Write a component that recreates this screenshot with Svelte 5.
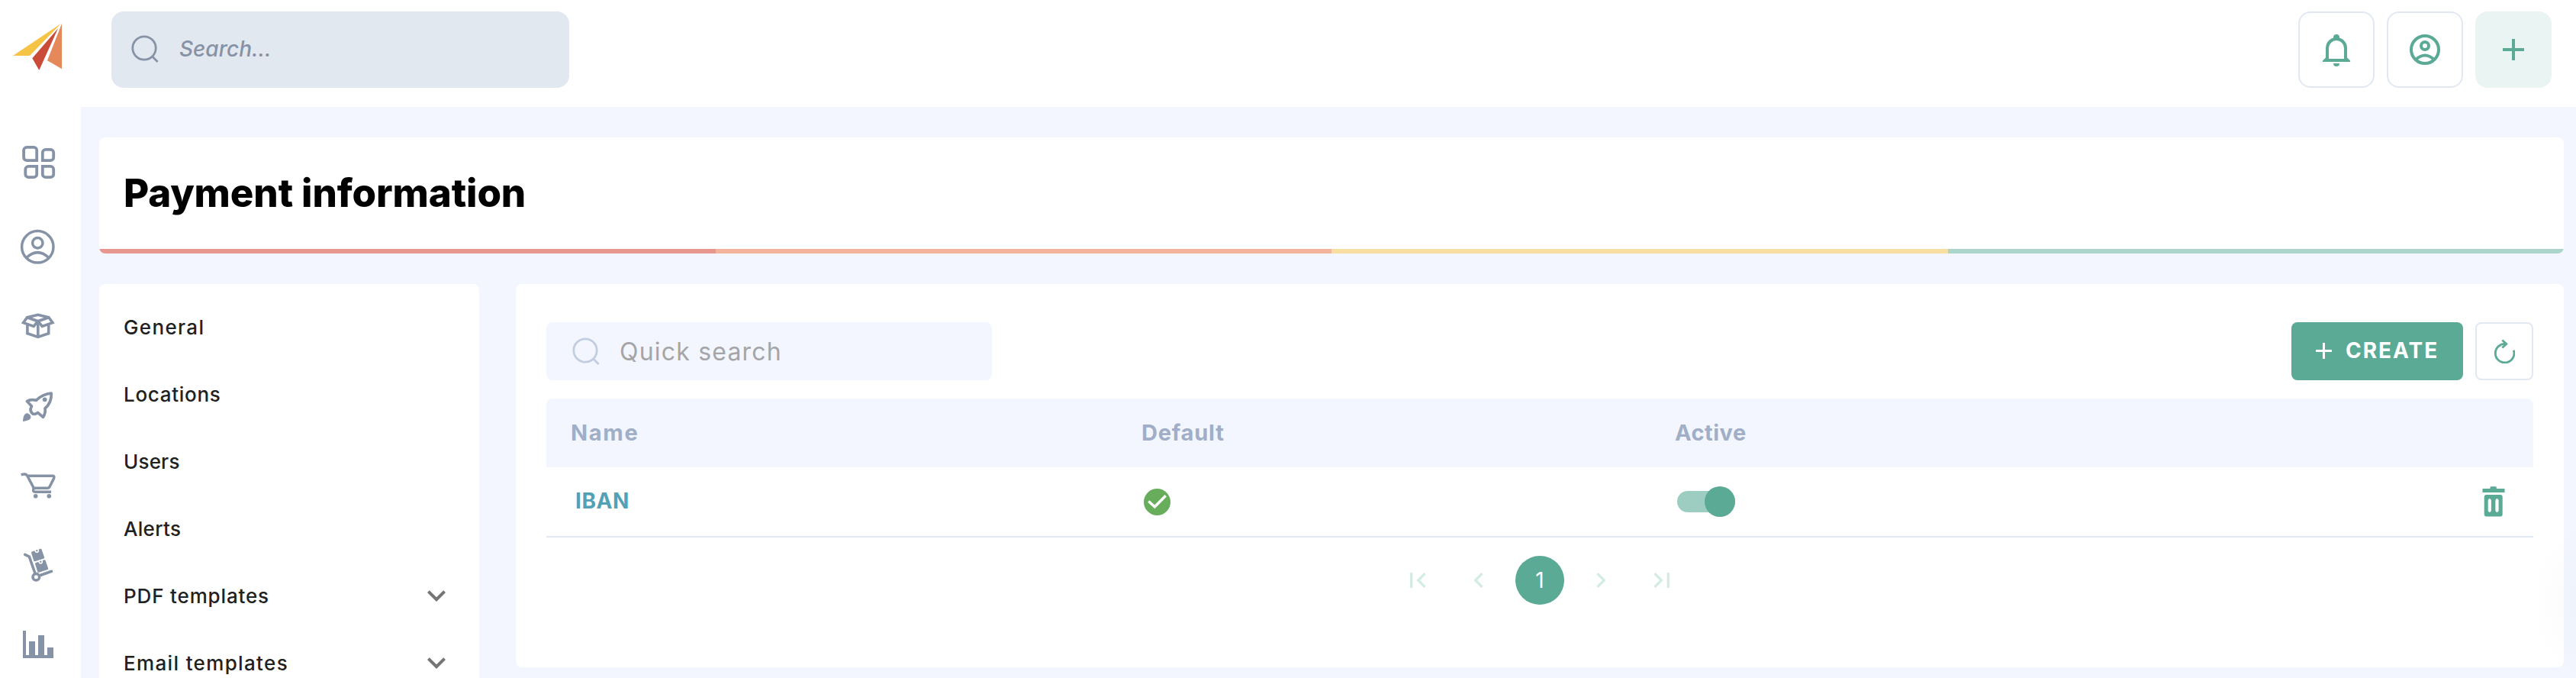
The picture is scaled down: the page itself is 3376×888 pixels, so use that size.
<script lang="ts">
  type MenuItem = { label: string; tracking: number; expandable?: boolean };

  const menu: MenuItem[] = [
    { label: 'General', tracking: 1.35 },
    { label: 'Locations', tracking: 0.7 },
    { label: 'Users', tracking: 0.2 },
    { label: 'Alerts', tracking: 0.3 },
    { label: 'PDF templates', tracking: 0.85, expandable: true },
    { label: 'Email templates', tracking: 1.35, expandable: true }
  ];

  const columns = [
    { label: 'Name', tracking: 1.7 },
    { label: 'Default', tracking: 0.8 },
    { label: 'Active', tracking: 0.5 }
  ];

  let methods = $state([{ name: 'IBAN', isDefault: true, active: true }]);
</script>

<div class="app">
  <aside class="sidebar">
    <a class="logo" href="#home" aria-label="Home">
      <svg width="64" height="62" viewBox="0 0 64 62">
        <path fill="#f6c445" d="M62.7 1 0 43h22z" />
        <path fill="#c94b38" d="M59 7.3 25.3 46.3l9 15.7z" />
        <path fill="#e5895b" d="M64 1 45 49.3l19 11z" />
      </svg>
    </a>
    <nav class="rail">
      <a href="#dashboard" aria-label="Dashboard">
        <svg class="icon" viewBox="0 0 48 48" stroke-width="3.8">
          <path d="M22.2 15.2H9.1a4 4 0 0 1-4-4V1.8a4 4 0 0 1 4-4h9.1a4 4 0 0 1 4 4z" />
          <path d="M29.8 15.2V4.8a4 4 0 0 1 4-4h6.4a4 4 0 0 1 4 4v6.4a4 4 0 0 1-4 4z" />
          <path d="M22.2 22.8v10.4a4 4 0 0 1-4 4h-6.9a4 4 0 0 1-4-4v-6.4a4 4 0 0 1 4-4z" />
          <path d="M29.8 22.8h10.4a4 4 0 0 1 4 4v6.4a4 4 0 0 1-4 4h-6.4a4 4 0 0 1-4-4z" />
        </svg>
      </a>
      <a href="#customers" aria-label="Customers">
        <svg class="icon" viewBox="0 0 48 48" stroke-width="3.5">
          <circle cx="23.3" cy="24.3" r="20.7" />
          <circle cx="23.3" cy="19.3" r="6.7" />
          <path d="M9 38.3q14.3-13.5 28.6 0" />
        </svg>
      </a>
      <a href="#products" aria-label="Products">
        <svg class="icon" viewBox="0 0 48 48" stroke-width="3.6">
          <path d="M9.5 12.8 23.7 17.7 18.2 24.4 4.6 19.6z" />
          <path d="M38 12.8 23.8 17.7l5.5 6.7 13.6-4.8z" />
          <path d="M9.5 12.8 23.7 9.3 38 12.8" />
          <path d="M9.9 22v11.6l13.9 4.8 13.9-4.8V22M23.8 18v20" />
        </svg>
      </a>
      <a href="#campaigns" aria-label="Campaigns">
        <svg class="icon" viewBox="0 0 48 48" stroke-width="3.7" stroke-linejoin="round">
          <path d="M41.2 8Q30 9 21.3 17.3 14 15.5 9.4 18.5L15.5 25Q12 31 17 35q3 1 6.5-1.6l7 6Q34 34 33 28 42 20 41.2 8z" />
          <circle class="solid" cx="32.7" cy="16.3" r="2.9" />
          <path class="solid" d="M4 45q.3-7 2.5-9.2a4.6 4.6 0 0 1 6.500 6.500Q10.500 44 4 45z" />
        </svg>
      </a>
      <a href="#orders" aria-label="Orders">
        <svg class="icon" viewBox="0 0 48 48" stroke-width="3.5">
          <path d="M1.7 10.8Q8 8.5 9.8 12.3l8.5 16h18.2q1.5 0 2.3-1.3l5.8-11.500q.9-3.200-1.100-3.200H10" />
          <path d="M18.3 28.3q-2.300 5 2.200 5H41" />
          <circle class="solid" cx="20.7" cy="38.7" r="2.8" />
          <circle class="solid" cx="38.3" cy="38.7" r="2.8" />
        </svg>
      </a>
      <a href="#stock" aria-label="Stock">
        <svg class="icon" viewBox="0 0 48 48" stroke-width="3.6" stroke-linecap="round">
          <path d="M6.7 11.3 12.3 14 20 36M27.5 38.2l14-4.900" />
          <circle cx="21.3" cy="40.7" r="4.3" />
          <path class="solid" d="M15 9q0-1 1-1.400l11-3.900q1-.3 1.500.8L32.200 15q.2 1-.7 1.400l-11.700 3.900q-1.100.3-1.500-.8z" />
          <path class="solid" d="M20 23.500q0-1 1-1.400l11-3.900q1-.3 1.500.8L37.200 29.500q.2 1-.7 1.400l-11.700 3.900q-1.100.3-1.500-.8z" />
          <circle class="notch" cx="22.300" cy="6.300" r="2" />
          <circle class="notch" cx="27.300" cy="20.800" r="2" />
        </svg>
      </a>
      <a href="#reports" aria-label="Reports">
        <svg class="icon" viewBox="0 0 48 48">
          <path class="solid" d="M4 7h4v32h4V21h8v18h4V13h8v26h4V29h8v14H4z" />
        </svg>
      </a>
    </nav>
  </aside>

  <div class="main">
    <header class="topbar">
      <div class="search">
        <svg class="lens" width="36" height="36" viewBox="0 0 36 36">
          <circle cx="17" cy="17" r="15.2" />
          <path d="m27.600 28 7 7" />
        </svg>
        <span>Search...</span>
      </div>
      <div class="actions">
        <button class="square" aria-label="Notifications">
          <svg class="icon" viewBox="0 0 48 48" stroke-width="4">
            <path d="M12 38V22a12 12 0 0 1 24 0v16" />
            <circle class="solid" cx="24" cy="8" r="4" />
            <path class="solid" d="M6 40v-1.500l4-4V36h28v-1.500l4 4V40zM20 42h8a4 4 0 0 1-8 0z" />
          </svg>
        </button>
        <button class="square" aria-label="Account">
          <svg class="icon" viewBox="0 0 48 48" stroke-width="4">
            <circle cx="24" cy="24" r="18" />
            <circle cx="24" cy="19" r="5" />
            <path d="M11.500 37.500q12.500-12 25 0" />
          </svg>
        </button>
        <button class="square tinted" aria-label="Add">
          <svg class="icon" viewBox="0 0 48 48" stroke-width="4">
            <path d="M24 10v28M10 24h28" />
          </svg>
        </button>
      </div>
    </header>

    <main class="content">
      <section class="title-card">
        <h1>Payment information</h1>
        <div class="stripes"><i></i><i></i><i></i><i></i></div>
      </section>

      <div class="columns">
        <nav class="menu">
          {#each menu as item}
            <a href="#settings" class="menu-item">
              <span style:letter-spacing="{item.tracking}px">{item.label}</span>
              {#if item.expandable}
                <svg width="48" height="48" viewBox="0 0 24 24">
                  <path fill="#757575" d="M7.41 8.59 12 13.17l4.59-4.58L18 10l-6 6-6-6z" />
                </svg>
              {/if}
            </a>
          {/each}
        </nav>

        <section class="panel">
          <div class="toolbar">
            <div class="quick">
              <svg class="lens" width="36" height="36" viewBox="0 0 36 36">
                <circle cx="17" cy="17" r="15.2" />
                <path d="m27.600 28 7 7" />
              </svg>
              <span>Quick search</span>
            </div>
            <div class="buttons">
              <button class="create">
                <svg width="21" height="21" viewBox="0 0 21 21">
                  <path fill="none" stroke="#fff" stroke-width="3" d="M10.500 0v21M0 10.500h21" />
                </svg>
                <span>CREATE</span>
              </button>
              <button class="refresh" aria-label="Refresh">
                <svg width="28" height="32" viewBox="0 0 28 32">
                  <path d="M26.300 14.800A12.300 12.300 0 1 1 16.500 6.500" />
                  <path d="m11.300 1.500 5.500 5-5.500 5" />
                </svg>
              </button>
            </div>
          </div>

          <div class="table">
            <div class="row head">
              {#each columns as column}
                <span style:letter-spacing="{column.tracking}px">{column.label}</span>
              {/each}
            </div>
            {#each methods as method}
              <div class="row">
                <a class="name" href="#method">{method.name}</a>
                <div class="cell">
                  {#if method.isDefault}
                    <svg width="35" height="35" viewBox="0 0 35 35">
                      <circle cx="17.500" cy="17.500" r="17.500" fill="#68ad5c" />
                      <path fill="none" stroke="#fff" stroke-width="3.500" d="m6.300 16.500 8 7.300L28.700 9.300" />
                    </svg>
                  {/if}
                </div>
                <div class="cell">
                  <button
                    class="toggle"
                    class:on={method.active}
                    aria-label="Active"
                    onclick={() => (method.active = !method.active)}
                  >
                    <span class="thumb"></span>
                  </button>
                </div>
                <button class="remove" aria-label="Delete">
                  <svg width="30" height="40" viewBox="0 0 30 40">
                    <path d="M.5 3h10V1.200q0-1 1-1h6.300q1 0 1 1V3h10.700v5h-29z" />
                    <path
                      fill-rule="evenodd"
                      d="M5.700 11h18a3 3 0 0 1 3 3v22.600a3 3 0 0 1-3 3h-18a3 3 0 0 1-3-3V14a3 3 0 0 1 3-3zM7.700 18v14q2.100 4 4.200 0V18q-2.100-4-4.200 0zM17.400 18v14q2.100 4 4.200 0V18q-2.100-4-4.200 0z"
                    />
                  </svg>
                </button>
              </div>
            {/each}
          </div>

          <div class="pager">
            <button aria-label="First page">
              <svg viewBox="0 0 24 24"><path d="M18.41 16.59 13.82 12l4.59-4.59L17 6l-6 6 6 6zM6 6h2v12H6z" /></svg>
            </button>
            <button aria-label="Previous page">
              <svg viewBox="0 0 24 24"><path d="M15.41 7.41 14 6l-6 6 6 6 1.41-1.41L10.83 12z" /></svg>
            </button>
            <button class="current">1</button>
            <button aria-label="Next page">
              <svg viewBox="0 0 24 24"><path d="M8.59 16.59 13.17 12 8.59 7.41 10 6l6 6-6 6z" /></svg>
            </button>
            <button aria-label="Last page">
              <svg viewBox="0 0 24 24"><path d="M5.59 7.41 10.18 12l-4.59 4.59L7 18l6-6-6-6zM16 6h2v12h-2z" /></svg>
            </button>
          </div>
        </section>
      </div>
    </main>
  </div>
  <div class="halo"></div>
</div>

<style>
  :global(body) {
    margin: 0;
    background: #f3f6fe;
  }
  .app {
    position: relative;
    display: flex;
    height: 888px;
    overflow: hidden;
    font-family: Inter, 'Liberation Sans', sans-serif;
    background: #f3f6fe;
  }
  a {
    color: inherit;
    text-decoration: none;
  }
  button {
    padding: 0;
    border: 0;
    background: none;
    font: inherit;
    box-sizing: border-box;
  }
  svg {
    display: block;
    flex: none;
  }
  .icon {
    width: 48px;
    height: 48px;
    fill: none;
    stroke: currentColor;
    overflow: visible;
  }
  .icon .solid {
    fill: currentColor;
    stroke: none;
  }
  .icon .notch {
    fill: currentColor;
    stroke: #fff;
    stroke-width: 1.6;
  }

  .sidebar {
    flex: none;
    width: 106px;
    background: #fff;
    color: #8692a6;
  }
  .logo {
    display: block;
    height: 107px;
    padding: 30px 0 30px 17px;
  }
  .rail a {
    display: flex;
    align-items: center;
    height: 104px;
    padding-left: 26px;
  }

  .main {
    flex: 1;
    min-width: 0;
  }
  .topbar {
    display: flex;
    justify-content: space-between;
    height: 140px;
    padding: 15px 32px 0 40px;
    box-sizing: border-box;
    background: #fff;
  }
  .search {
    display: flex;
    align-items: center;
    gap: 27px;
    width: 600px;
    height: 100px;
    padding: 0 26px 2px;
    box-sizing: border-box;
    border-radius: 16px;
    background: #e2e8f0;
    color: #8692a6;
    font-size: 28px;
    font-style: italic;
    font-weight: 500;
  }
  .lens {
    fill: none;
    stroke: currentColor;
    stroke-width: 2.8;
  }
  .actions {
    display: flex;
    gap: 16px;
  }
  .square {
    display: flex;
    align-items: center;
    justify-content: center;
    width: 100px;
    height: 100px;
    border: 2px solid #e2e8f2;
    border-radius: 16px;
    color: #5aaa96;
  }
  .square.tinted {
    border: 0;
    background: #eaf5f3;
  }

  .content {
    padding: 40px 16px 0 24px;
  }
  .title-card {
    height: 152px;
    border-radius: 8px;
    overflow: hidden;
    background: #fff;
  }
  h1 {
    margin: 0;
    padding-left: 32px;
    font-size: 51px;
    font-weight: 800;
    line-height: 146px;
    letter-spacing: -0.1px;
    color: #000;
  }
  .stripes {
    display: flex;
    height: 6px;
  }
  .stripes i {
    flex: 1;
    background: #e8978f;
  }
  .stripes i:nth-child(2) {
    background: #f2b49c;
  }
  .stripes i:nth-child(3) {
    background: #f6dfa0;
  }
  .stripes i:nth-child(4) {
    background: #abd4ca;
  }

  .columns {
    display: flex;
    align-items: flex-start;
    gap: 48px;
    margin-top: 40px;
  }
  .menu {
    flex: none;
    width: 498px;
    height: 560px;
    padding: 12px 32px 0;
    box-sizing: border-box;
    border-radius: 8px;
    background: #fff;
  }
  .menu-item {
    display: flex;
    align-items: center;
    justify-content: space-between;
    height: 88px;
    font-size: 26px;
    font-weight: 450;
    color: #212121;
    white-space: nowrap;
  }
  .panel {
    flex: 1;
    height: 502px;
    padding: 50px 40px 0;
    box-sizing: border-box;
    border-radius: 8px;
    background: #fff;
  }
  .toolbar,
  .buttons {
    display: flex;
    justify-content: space-between;
  }
  .quick {
    display: flex;
    align-items: center;
    gap: 26px;
    width: 584px;
    height: 76px;
    padding-left: 34px;
    box-sizing: border-box;
    border-radius: 8px;
    background: #f3f6fe;
    color: #a5a5a8;
    font-size: 32px;
    letter-spacing: 1.2px;
  }
  .quick .lens {
    color: #c3cde0;
  }
  .buttons {
    gap: 16px;
  }
  .create {
    display: flex;
    align-items: center;
    gap: 18px;
    width: 225px;
    height: 76px;
    padding: 0 0 2px 32px;
    border-radius: 8px;
    background: #5aaa96;
    color: #fff;
    font-size: 28px;
    font-weight: 700;
    letter-spacing: 2px;
  }
  .refresh {
    display: flex;
    align-items: center;
    justify-content: center;
    width: 76px;
    height: 76px;
    border: 2px solid #e2e8f2;
    border-radius: 8px;
  }
  .refresh path {
    fill: none;
    stroke: #5aaa96;
    stroke-width: 2.8;
  }

  .table {
    margin-top: 24px;
  }
  .row {
    display: grid;
    grid-template-columns: 748px 699px 1fr auto;
    align-items: center;
    height: 92px;
    padding-left: 32px;
    box-sizing: border-box;
    border-bottom: 2px solid #e2e8f2;
    font-size: 28px;
    font-weight: 700;
  }
  .row.head {
    height: 90px;
    padding-bottom: 2px;
    border-bottom: 0;
    border-radius: 8px 8px 0 0;
    background: #f3f6fe;
    color: #a0aec8;
    font-size: 29px;
  }
  .name {
    padding: 0 0 2px 6px;
    letter-spacing: 0.6px;
    color: #52a1b6;
  }
  .cell {
    padding-left: 3px;
  }
  .toggle {
    display: flex;
    align-items: center;
    width: 76px;
    height: 28px;
    border-radius: 14px;
    background: #c4ccd6;
  }
  .toggle.on {
    justify-content: flex-end;
    background: #9dccc1;
  }
  .thumb {
    flex: none;
    width: 40px;
    height: 40px;
    border-radius: 50%;
    background: #5aaa96;
  }
  .remove {
    margin-right: 37px;
  }
  .remove path {
    fill: #5aaa96;
  }

  .pager {
    display: flex;
    justify-content: center;
    gap: 16px;
    margin-top: 24px;
  }
  .pager button {
    display: flex;
    align-items: center;
    justify-content: center;
    width: 64px;
    height: 64px;
    border-radius: 50%;
    font-size: 28px;
  }
  .pager svg {
    width: 40px;
    height: 40px;
    fill: #d5ebe5;
  }
  .pager .current {
    background: #5aaa96;
    color: #fff;
  }

  .halo {
    position: absolute;
    right: 0;
    bottom: 0;
    width: 60px;
    height: 200px;
    pointer-events: none;
    background: radial-gradient(ellipse 60px 100px at 100% 50%, rgba(70, 90, 160, 0.025), transparent);
  }
</style>
